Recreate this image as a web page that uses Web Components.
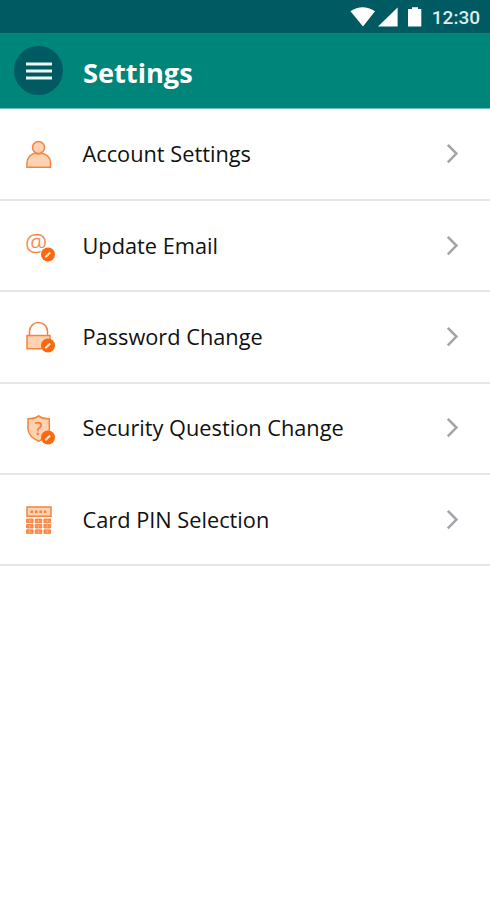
<!DOCTYPE html>
<html lang="en"><head><meta charset="utf-8"><title>Settings</title>
<style>body{margin:0;background:#fff;font-family:"Open Sans","Noto Sans",sans-serif}</style></head>
<body>
<settings-screen></settings-screen>
<script>
const define = (name, html) => {
  const t = document.createElement('template');
  t.innerHTML = html;
  customElements.define(name, class extends HTMLElement {
    constructor() { super(); this.attachShadow({mode:'open'}).append(t.content.cloneNode(true)); }
  });
};
define('status-bar', `<style>
:host{display:flex;height:33px;background:#005a62;align-items:center;justify-content:flex-end;box-sizing:border-box;padding:2px 10px 0 0;color:#dfecee;font:500 19px/31px Roboto,sans-serif}
svg{display:block;margin:0 8px 2px 0}</style>
<svg width="74" height="22" viewBox="0 0 74 22" fill="#fff"><path d="M.5 5.3Q12.5-2.8 25 5.3L13 20.5Z"/><path d="M47.6 1.5V20.5H28Z"/><path d="M59.5 3H62V1.2h6V3h3.3v17.5H58V3Z"/></svg><span>12:30</span>`);
define('app-header', `<style>
:host{display:flex;height:76px;background:#00857a;align-items:center;box-sizing:border-box;padding-left:14px;border-bottom:1px solid #72bab4}
.menu{display:grid;place-items:center;width:49px;height:49px;border-radius:50%;background:#005a62}
h1{margin:4px 0 0 20px;color:#fff;font-size:27.2px;line-height:36px;font-weight:700}</style>
<div class="menu"><svg width="26" height="18" viewBox="0 0 26 18" stroke="#eef6f6" stroke-width="3.2"><path d="M0 2H26M0 9H26M0 16H26"/></svg></div><h1><slot></slot></h1>`);
define('menu-row', `<style>
:host{display:flex;height:91.4px;align-items:center;box-sizing:border-box;border-bottom:2px solid #e6e6e7;padding:0 31px 0 15px;color:#111}
.label{flex:1;padding-left:17.5px;font-size:21.75px;line-height:30px;white-space:nowrap}</style>
<slot name="icon"></slot><span class="label"><slot></slot></span>
<svg width="14" height="22" viewBox="0 0 14 22" fill="none" stroke="#a3a5a9" stroke-width="2.6"><path d="M2.8 1.8L11.4 10.6L2.8 19.4"/></svg>`);
const badge = '<g stroke="none"><circle cx="33" cy="33.5" r="7" fill="#fa690f"/><path d="M30.3 36.3L35.2 31.5" stroke="#ffe3cf" stroke-width="2.1"/></g>';
let keys = '';
for (const y of [24, 29.4, 34.8]) for (const x of [11.5, 20.2, 28.9])
  keys += `<path fill="#fa9050" stroke="#f47a36" stroke-width=".8" d="M${x} ${y}h6.6v3.6h-6.6z"/><path stroke="#ffb888" stroke-width="1" d="M${x+3.3} ${y+.6}v2.5"/>`;
const art = {
  person: '<circle cx="23.5" cy="17.4" r="6"/><path d="M12 37.2V33C12 27.5 16 24 20.2 23.2Q23.5 25 26.8 23.2C31.5 24 35.5 27.5 35.5 33V37.2Z"/>',
  email: '<text x="21" y="30" text-anchor="middle" font-family="Open Sans" font-weight="300" font-size="24.5" fill="#f47a36" stroke="#f58c50" stroke-width=".3">@</text>' + badge,
  lock: '<path fill="none" d="M14.5 23.5V19.5a9 9 0 0 1 18 0V23.5"/><path d="M12 23.5H35V36.7H12Z"/>' + badge,
  shield: '<path d="M23.7 11.8Q28 15.2 34.3 14.8V25.5Q33.5 33 23.7 37.2Q13.8 33 13 25.5V14.8Q19.2 15.2 23.7 11.8Z"/><text x="23.5" y="31" text-anchor="middle" font-family="Open Sans" font-size="17.5" fill="#f47a36" stroke="#f47a36" stroke-width=".3">?</text>' + badge,
  keypad: '<path d="M12 12H36V21.2H12Z"/><path stroke-width="2.5" stroke-dasharray="2.7 1.7" d="M15.5 16.7H32.5"/>' + keys
};
customElements.define('row-icon', class extends HTMLElement {
  connectedCallback() {
    const root = this.attachShadow({mode:'open'});
    root.innerHTML = `<style>:host{display:block;width:50px;height:50px;padding-top:1px}svg{display:block}</style><svg width="50" height="50" viewBox="0 0 50 50" fill="#ffd2b2" stroke="#f5843f" stroke-width="1.5">${art[this.getAttribute('kind')]}</svg>`;
  }
});
define('settings-screen', `<style>:host{display:block;min-height:900px;background:#fff}.list{padding-top:.5px}</style>
<status-bar></status-bar><app-header>Settings</app-header><div class="list">
<menu-row><row-icon slot="icon" kind="person"></row-icon>Account Settings</menu-row>
<menu-row><row-icon slot="icon" kind="email"></row-icon>Update Email</menu-row>
<menu-row><row-icon slot="icon" kind="lock"></row-icon>Password Change</menu-row>
<menu-row><row-icon slot="icon" kind="shield"></row-icon>Security Question Change</menu-row>
<menu-row><row-icon slot="icon" kind="keypad"></row-icon>Card PIN Selection</menu-row></div>`);
</script></body></html>
